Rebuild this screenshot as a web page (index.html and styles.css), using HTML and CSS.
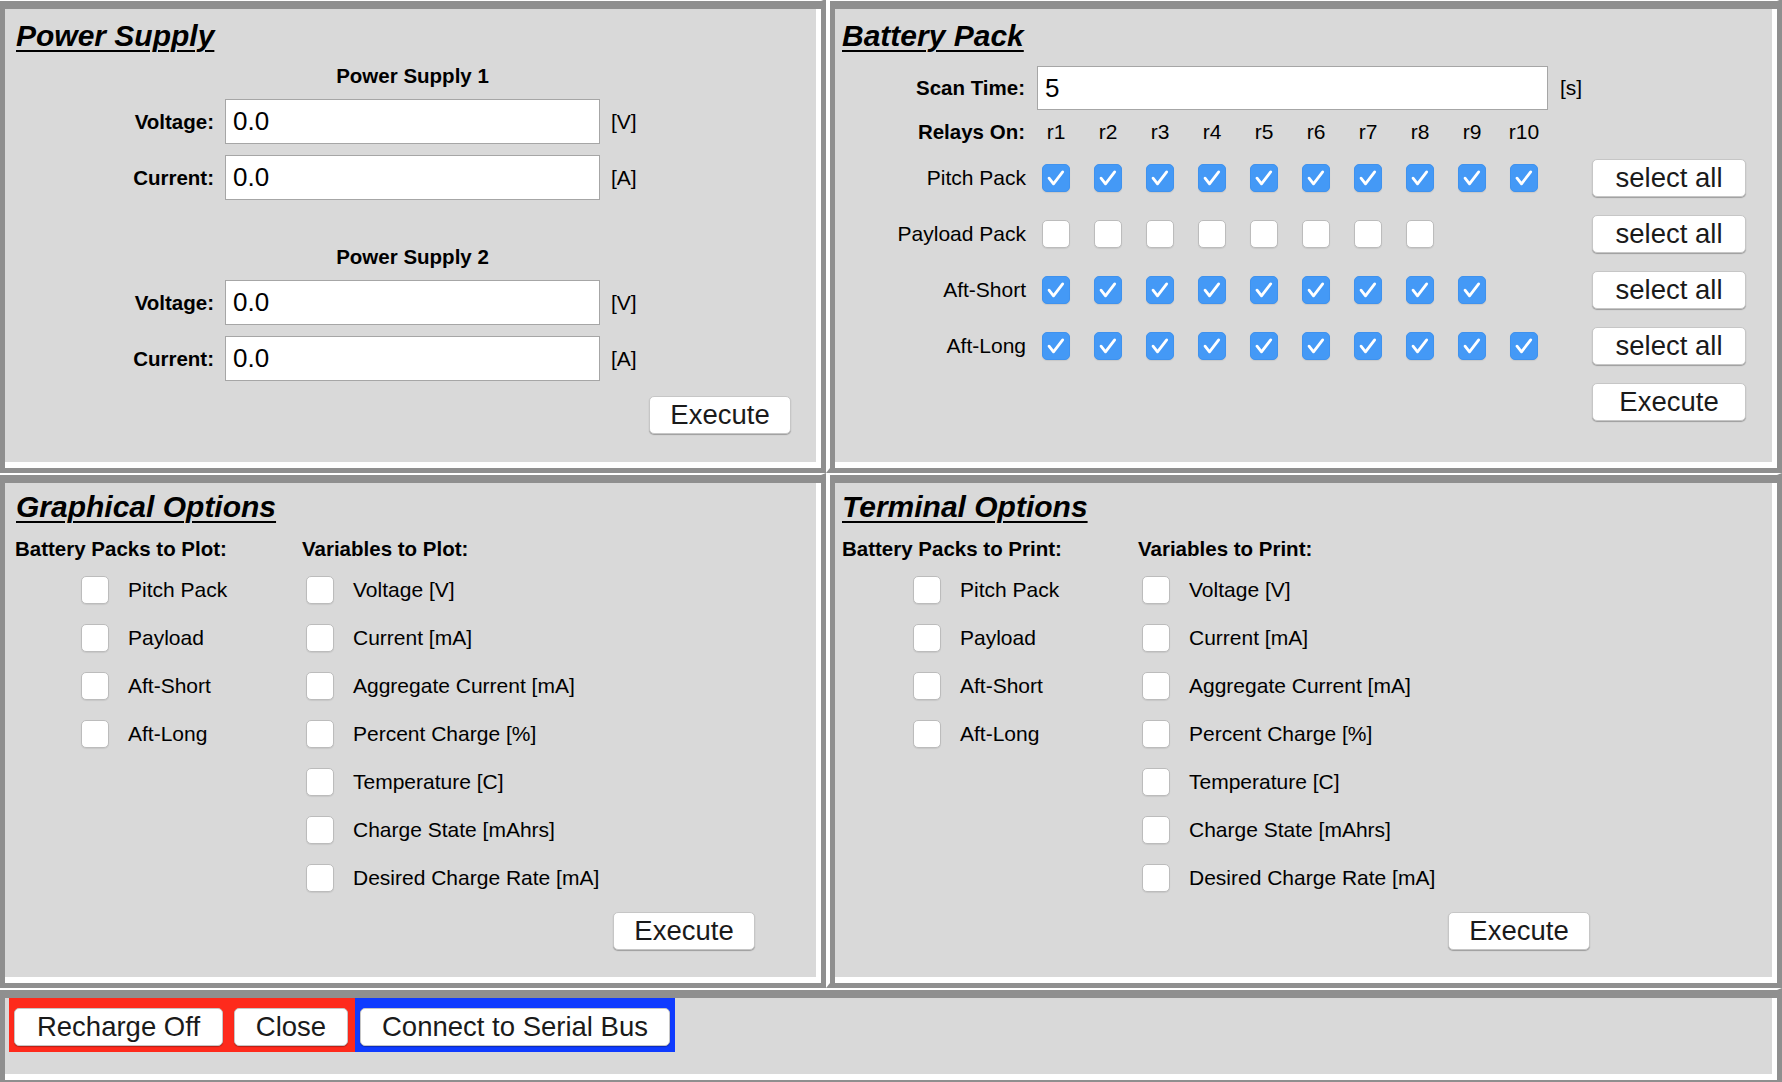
FILE: index.html
```html
<!DOCTYPE html>
<html>
<head>
<meta charset="utf-8">
<title>Battery Control</title>
<link rel="stylesheet" href="styles.css">
</head>
<body>
<div class="app">

  <section class="panel left top ps">
    <h2 class="title">Power Supply</h2>
    <div class="ps-form">
      <div class="ps-head">Power Supply 1</div>
      <label class="flabel">Voltage:</label><input class="field" value="0.0"><span class="unit">[V]</span>
      <label class="flabel">Current:</label><input class="field" value="0.0"><span class="unit">[A]</span>
      <div class="ps-head second">Power Supply 2</div>
      <label class="flabel">Voltage:</label><input class="field" value="0.0"><span class="unit">[V]</span>
      <label class="flabel">Current:</label><input class="field" value="0.0"><span class="unit">[A]</span>
    </div>
    <div class="actions"><button class="btn w-exec">Execute</button></div>
  </section>

  <section class="panel top bp">
    <h2 class="title">Battery Pack</h2>
    <div class="bp-grid">
      <label class="flabel bl">Scan Time:</label><input class="field scan" value="5"><span class="unit su">[s]</span>

      <span class="flabel bl">Relays On:</span>
      <span class="rh">r1</span><span class="rh">r2</span><span class="rh">r3</span><span class="rh">r4</span><span class="rh">r5</span><span class="rh">r6</span><span class="rh">r7</span><span class="rh">r8</span><span class="rh">r9</span><span class="rh">r10</span>

      <span class="rl">Pitch Pack</span>
      <span class="cb on"><svg viewBox="0 0 28 28"><path d="M6.5 14.2L11.3 20.3L21.2 7.4"/></svg></span>
      <span class="cb on"><svg viewBox="0 0 28 28"><path d="M6.5 14.2L11.3 20.3L21.2 7.4"/></svg></span>
      <span class="cb on"><svg viewBox="0 0 28 28"><path d="M6.5 14.2L11.3 20.3L21.2 7.4"/></svg></span>
      <span class="cb on"><svg viewBox="0 0 28 28"><path d="M6.5 14.2L11.3 20.3L21.2 7.4"/></svg></span>
      <span class="cb on"><svg viewBox="0 0 28 28"><path d="M6.5 14.2L11.3 20.3L21.2 7.4"/></svg></span>
      <span class="cb on"><svg viewBox="0 0 28 28"><path d="M6.5 14.2L11.3 20.3L21.2 7.4"/></svg></span>
      <span class="cb on"><svg viewBox="0 0 28 28"><path d="M6.5 14.2L11.3 20.3L21.2 7.4"/></svg></span>
      <span class="cb on"><svg viewBox="0 0 28 28"><path d="M6.5 14.2L11.3 20.3L21.2 7.4"/></svg></span>
      <span class="cb on"><svg viewBox="0 0 28 28"><path d="M6.5 14.2L11.3 20.3L21.2 7.4"/></svg></span>
      <span class="cb on"><svg viewBox="0 0 28 28"><path d="M6.5 14.2L11.3 20.3L21.2 7.4"/></svg></span>
      <button class="btn w-sel sel">select all</button>

      <span class="rl">Payload Pack</span>
      <span class="cb"></span><span class="cb"></span><span class="cb"></span><span class="cb"></span>
      <span class="cb"></span><span class="cb"></span><span class="cb"></span><span class="cb"></span>
      <button class="btn w-sel sel">select all</button>

      <span class="rl">Aft-Short</span>
      <span class="cb on"><svg viewBox="0 0 28 28"><path d="M6.5 14.2L11.3 20.3L21.2 7.4"/></svg></span>
      <span class="cb on"><svg viewBox="0 0 28 28"><path d="M6.5 14.2L11.3 20.3L21.2 7.4"/></svg></span>
      <span class="cb on"><svg viewBox="0 0 28 28"><path d="M6.5 14.2L11.3 20.3L21.2 7.4"/></svg></span>
      <span class="cb on"><svg viewBox="0 0 28 28"><path d="M6.5 14.2L11.3 20.3L21.2 7.4"/></svg></span>
      <span class="cb on"><svg viewBox="0 0 28 28"><path d="M6.5 14.2L11.3 20.3L21.2 7.4"/></svg></span>
      <span class="cb on"><svg viewBox="0 0 28 28"><path d="M6.5 14.2L11.3 20.3L21.2 7.4"/></svg></span>
      <span class="cb on"><svg viewBox="0 0 28 28"><path d="M6.5 14.2L11.3 20.3L21.2 7.4"/></svg></span>
      <span class="cb on"><svg viewBox="0 0 28 28"><path d="M6.5 14.2L11.3 20.3L21.2 7.4"/></svg></span>
      <span class="cb on"><svg viewBox="0 0 28 28"><path d="M6.5 14.2L11.3 20.3L21.2 7.4"/></svg></span>
      <button class="btn w-sel sel">select all</button>

      <span class="rl">Aft-Long</span>
      <span class="cb on"><svg viewBox="0 0 28 28"><path d="M6.5 14.2L11.3 20.3L21.2 7.4"/></svg></span>
      <span class="cb on"><svg viewBox="0 0 28 28"><path d="M6.5 14.2L11.3 20.3L21.2 7.4"/></svg></span>
      <span class="cb on"><svg viewBox="0 0 28 28"><path d="M6.5 14.2L11.3 20.3L21.2 7.4"/></svg></span>
      <span class="cb on"><svg viewBox="0 0 28 28"><path d="M6.5 14.2L11.3 20.3L21.2 7.4"/></svg></span>
      <span class="cb on"><svg viewBox="0 0 28 28"><path d="M6.5 14.2L11.3 20.3L21.2 7.4"/></svg></span>
      <span class="cb on"><svg viewBox="0 0 28 28"><path d="M6.5 14.2L11.3 20.3L21.2 7.4"/></svg></span>
      <span class="cb on"><svg viewBox="0 0 28 28"><path d="M6.5 14.2L11.3 20.3L21.2 7.4"/></svg></span>
      <span class="cb on"><svg viewBox="0 0 28 28"><path d="M6.5 14.2L11.3 20.3L21.2 7.4"/></svg></span>
      <span class="cb on"><svg viewBox="0 0 28 28"><path d="M6.5 14.2L11.3 20.3L21.2 7.4"/></svg></span>
      <span class="cb on"><svg viewBox="0 0 28 28"><path d="M6.5 14.2L11.3 20.3L21.2 7.4"/></svg></span>
      <button class="btn w-sel sel">select all</button>

      <button class="btn w-sel sel">Execute</button>
    </div>
  </section>

  <section class="panel left graph">
    <h2 class="title">Graphical Options</h2>
    <div class="opts">
      <div class="col packs">
        <div class="colhead">Battery Packs to Plot:</div>
        <div class="opt"><span class="cb"></span><span class="lbl">Pitch Pack</span></div>
        <div class="opt"><span class="cb"></span><span class="lbl">Payload</span></div>
        <div class="opt"><span class="cb"></span><span class="lbl">Aft-Short</span></div>
        <div class="opt"><span class="cb"></span><span class="lbl">Aft-Long</span></div>
      </div>
      <div class="col vars">
        <div class="colhead">Variables to Plot:</div>
        <div class="opt"><span class="cb"></span><span class="lbl">Voltage [V]</span></div>
        <div class="opt"><span class="cb"></span><span class="lbl">Current [mA]</span></div>
        <div class="opt"><span class="cb"></span><span class="lbl">Aggregate Current [mA]</span></div>
        <div class="opt"><span class="cb"></span><span class="lbl">Percent Charge [%]</span></div>
        <div class="opt"><span class="cb"></span><span class="lbl">Temperature [C]</span></div>
        <div class="opt"><span class="cb"></span><span class="lbl">Charge State [mAhrs]</span></div>
        <div class="opt"><span class="cb"></span><span class="lbl">Desired Charge Rate [mA]</span></div>
      </div>
      <div class="exec-wrap"><button class="btn w-exec">Execute</button></div>
    </div>
  </section>

  <section class="panel term">
    <h2 class="title">Terminal Options</h2>
    <div class="opts">
      <div class="col packs">
        <div class="colhead">Battery Packs to Print:</div>
        <div class="opt"><span class="cb"></span><span class="lbl">Pitch Pack</span></div>
        <div class="opt"><span class="cb"></span><span class="lbl">Payload</span></div>
        <div class="opt"><span class="cb"></span><span class="lbl">Aft-Short</span></div>
        <div class="opt"><span class="cb"></span><span class="lbl">Aft-Long</span></div>
      </div>
      <div class="col vars">
        <div class="colhead">Variables to Print:</div>
        <div class="opt"><span class="cb"></span><span class="lbl">Voltage [V]</span></div>
        <div class="opt"><span class="cb"></span><span class="lbl">Current [mA]</span></div>
        <div class="opt"><span class="cb"></span><span class="lbl">Aggregate Current [mA]</span></div>
        <div class="opt"><span class="cb"></span><span class="lbl">Percent Charge [%]</span></div>
        <div class="opt"><span class="cb"></span><span class="lbl">Temperature [C]</span></div>
        <div class="opt"><span class="cb"></span><span class="lbl">Charge State [mAhrs]</span></div>
        <div class="opt"><span class="cb"></span><span class="lbl">Desired Charge Rate [mA]</span></div>
      </div>
      <div class="exec-wrap"><button class="btn w-exec">Execute</button></div>
    </div>
  </section>

  <section class="panel left wide bottom">
    <div class="frame red">
      <button class="btn w-recharge">Recharge Off</button>
      <button class="btn w-close">Close</button>
    </div>
    <div class="frame blue">
      <button class="btn w-connect">Connect to Serial Bus</button>
    </div>
  </section>

</div>
</body>
</html>
```

FILE: styles.css
```css
* { box-sizing: border-box; }
html, body { margin: 0; padding: 0; }
body {
  width: 1782px;
  height: 1082px;
  overflow: hidden;
  background: #fff;
  color: #000;
  font-family: "Liberation Sans", Arial, Helvetica, sans-serif;
}

.app {
  display: grid;
  grid-template-columns: 830px 956px;
  grid-template-rows: 474px 515px 97px;
  margin: -1px 0 0 -4px;
}

.panel {
  background: #d9d9d9;
  border-style: solid;
  border-width: 2px 5px 5px 4px;
  border-color: #fff #8f8f8f #8f8f8f #fff;
  box-shadow: inset 5px 8px 0 #8f8f8f, inset -5px -6px 0 #fff;
  padding: 8px 5px 6px 5px;
  min-width: 0;
  min-height: 0;
}
.panel.left { padding-left: 9px; }
.panel.wide { grid-column: 1 / -1; }

.title {
  margin: 7px 0 0;
  padding-left: 7px;
  font: italic bold 30px/34px "Liberation Sans", Arial, sans-serif;
  text-decoration: underline;
  text-decoration-thickness: 2px;
  text-underline-offset: 4px;
}
.panel.top .title { margin-top: 10px; }

/* generic controls */
.field {
  display: block;
  width: 100%;
  background: #fff;
  border: 1px solid #a6a6a6;
  border-radius: 0;
  padding: 0 0 0 7px;
  margin: 0;
  font: 26px "Liberation Sans", Arial, sans-serif;
  color: #000;
  outline: none;
}
.flabel {
  font: bold 20.5px/24px "Liberation Sans", Arial, sans-serif;
  text-align: right;
}
.unit {
  font: 21px/24px "Liberation Sans", Arial, sans-serif;
}
.btn {
  height: 38px;
  padding: 0;
  margin: 0;
  background: #fff;
  border: 1px solid #c6c6c6;
  border-radius: 5px;
  box-shadow: 0 1px 1px rgba(0, 0, 0, 0.28);
  font: 27.5px/1 "Liberation Sans", Arial, sans-serif;
  color: #1a1a1a;
  text-align: center;
}
.w-exec { width: 142px; }
.w-sel { width: 154px; }
.w-recharge { width: 209px; }
.w-close { width: 114px; }
.w-connect { width: 310px; }

.cb {
  display: block;
  width: 28px;
  height: 28px;
  flex: none;
  background: #fff;
  border: 1px solid #bcbcbc;
  border-radius: 5px;
  box-shadow: 0 1px 1px rgba(0, 0, 0, 0.08);
}
.cb.on {
  background: #4499f6;
  border-color: #3f92ee;
}
.cb svg {
  display: block;
  width: 26px;
  height: 26px;
}
.cb svg path {
  fill: none;
  stroke: #fff;
  stroke-width: 3;
  stroke-linecap: round;
  stroke-linejoin: round;
}

/* power supply */
.ps-form {
  display: grid;
  grid-template-columns: 205px 375px auto;
  column-gap: 11px;
  row-gap: 11px;
  align-items: center;
  margin-top: 11px;
}
.ps-head {
  grid-column: 2;
  text-align: center;
  font: bold 20.5px/24px "Liberation Sans", Arial, sans-serif;
}
.ps-head.second { margin-top: 34px; }
.ps-form .flabel { grid-column: 1; }
.ps-form .field { grid-column: 2; height: 45px; }
.ps-form .unit { grid-column: 3; }
.actions {
  display: flex;
  justify-content: flex-end;
  padding-right: 25px;
  margin-top: 15px;
}

/* battery pack */
.bp-grid {
  display: grid;
  grid-template-columns: 195px repeat(10, 52px) 42px 154px;
  grid-template-rows: 50px 37px repeat(5, 56px);
  align-items: center;
  margin-top: 10px;
}
.bp-grid .bl { grid-column: 1; padding-right: 5px; }
.bp-grid .scan {
  grid-column: 2 / span 10;
  height: 44px;
  width: auto;
  margin: 0 2px 0 7px;
}
.bp-grid .su { grid-column: 12; padding-left: 10px; }
.rh {
  text-align: center;
  font: 21px/24px "Liberation Sans", Arial, sans-serif;
}
.rl {
  grid-column: 1;
  text-align: right;
  padding-right: 4px;
  font: 21px/24px "Liberation Sans", Arial, sans-serif;
}
.bp-grid .cb { justify-self: center; }
.bp-grid .sel { grid-column: 13; }

/* options panels */
.opts {
  display: grid;
  grid-template-columns: 287px 311px auto;
  grid-template-rows: auto auto;
  margin: 13px 0 0 6px;
}
.term .opts {
  grid-template-columns: 296px 310px auto;
  margin-left: 7px;
}
.colhead {
  font: bold 20.5px/24px "Liberation Sans", Arial, sans-serif;
  margin-bottom: 5px;
  white-space: nowrap;
}
.opt {
  display: flex;
  align-items: center;
  height: 48px;
  font: 21px/24px "Liberation Sans", Arial, sans-serif;
  white-space: nowrap;
}
.packs .opt { padding-left: 66px; }
.term .packs .opt { padding-left: 71px; }
.vars .opt { padding-left: 4px; }
.opt .lbl { margin-left: 19px; }
.exec-wrap {
  grid-column: 3;
  grid-row: 2;
  margin-top: 10px;
}

/* bottom bar */
.bottom {
  display: flex;
  align-items: flex-start;
}
.frame {
  display: flex;
  gap: 11px;
  padding: 10px 5px 6px 5px;
}
.frame.red {
  background: #fe2a1c;
  padding-right: 7px;
}
.frame.blue {
  background: #0f3bff;
}
```
